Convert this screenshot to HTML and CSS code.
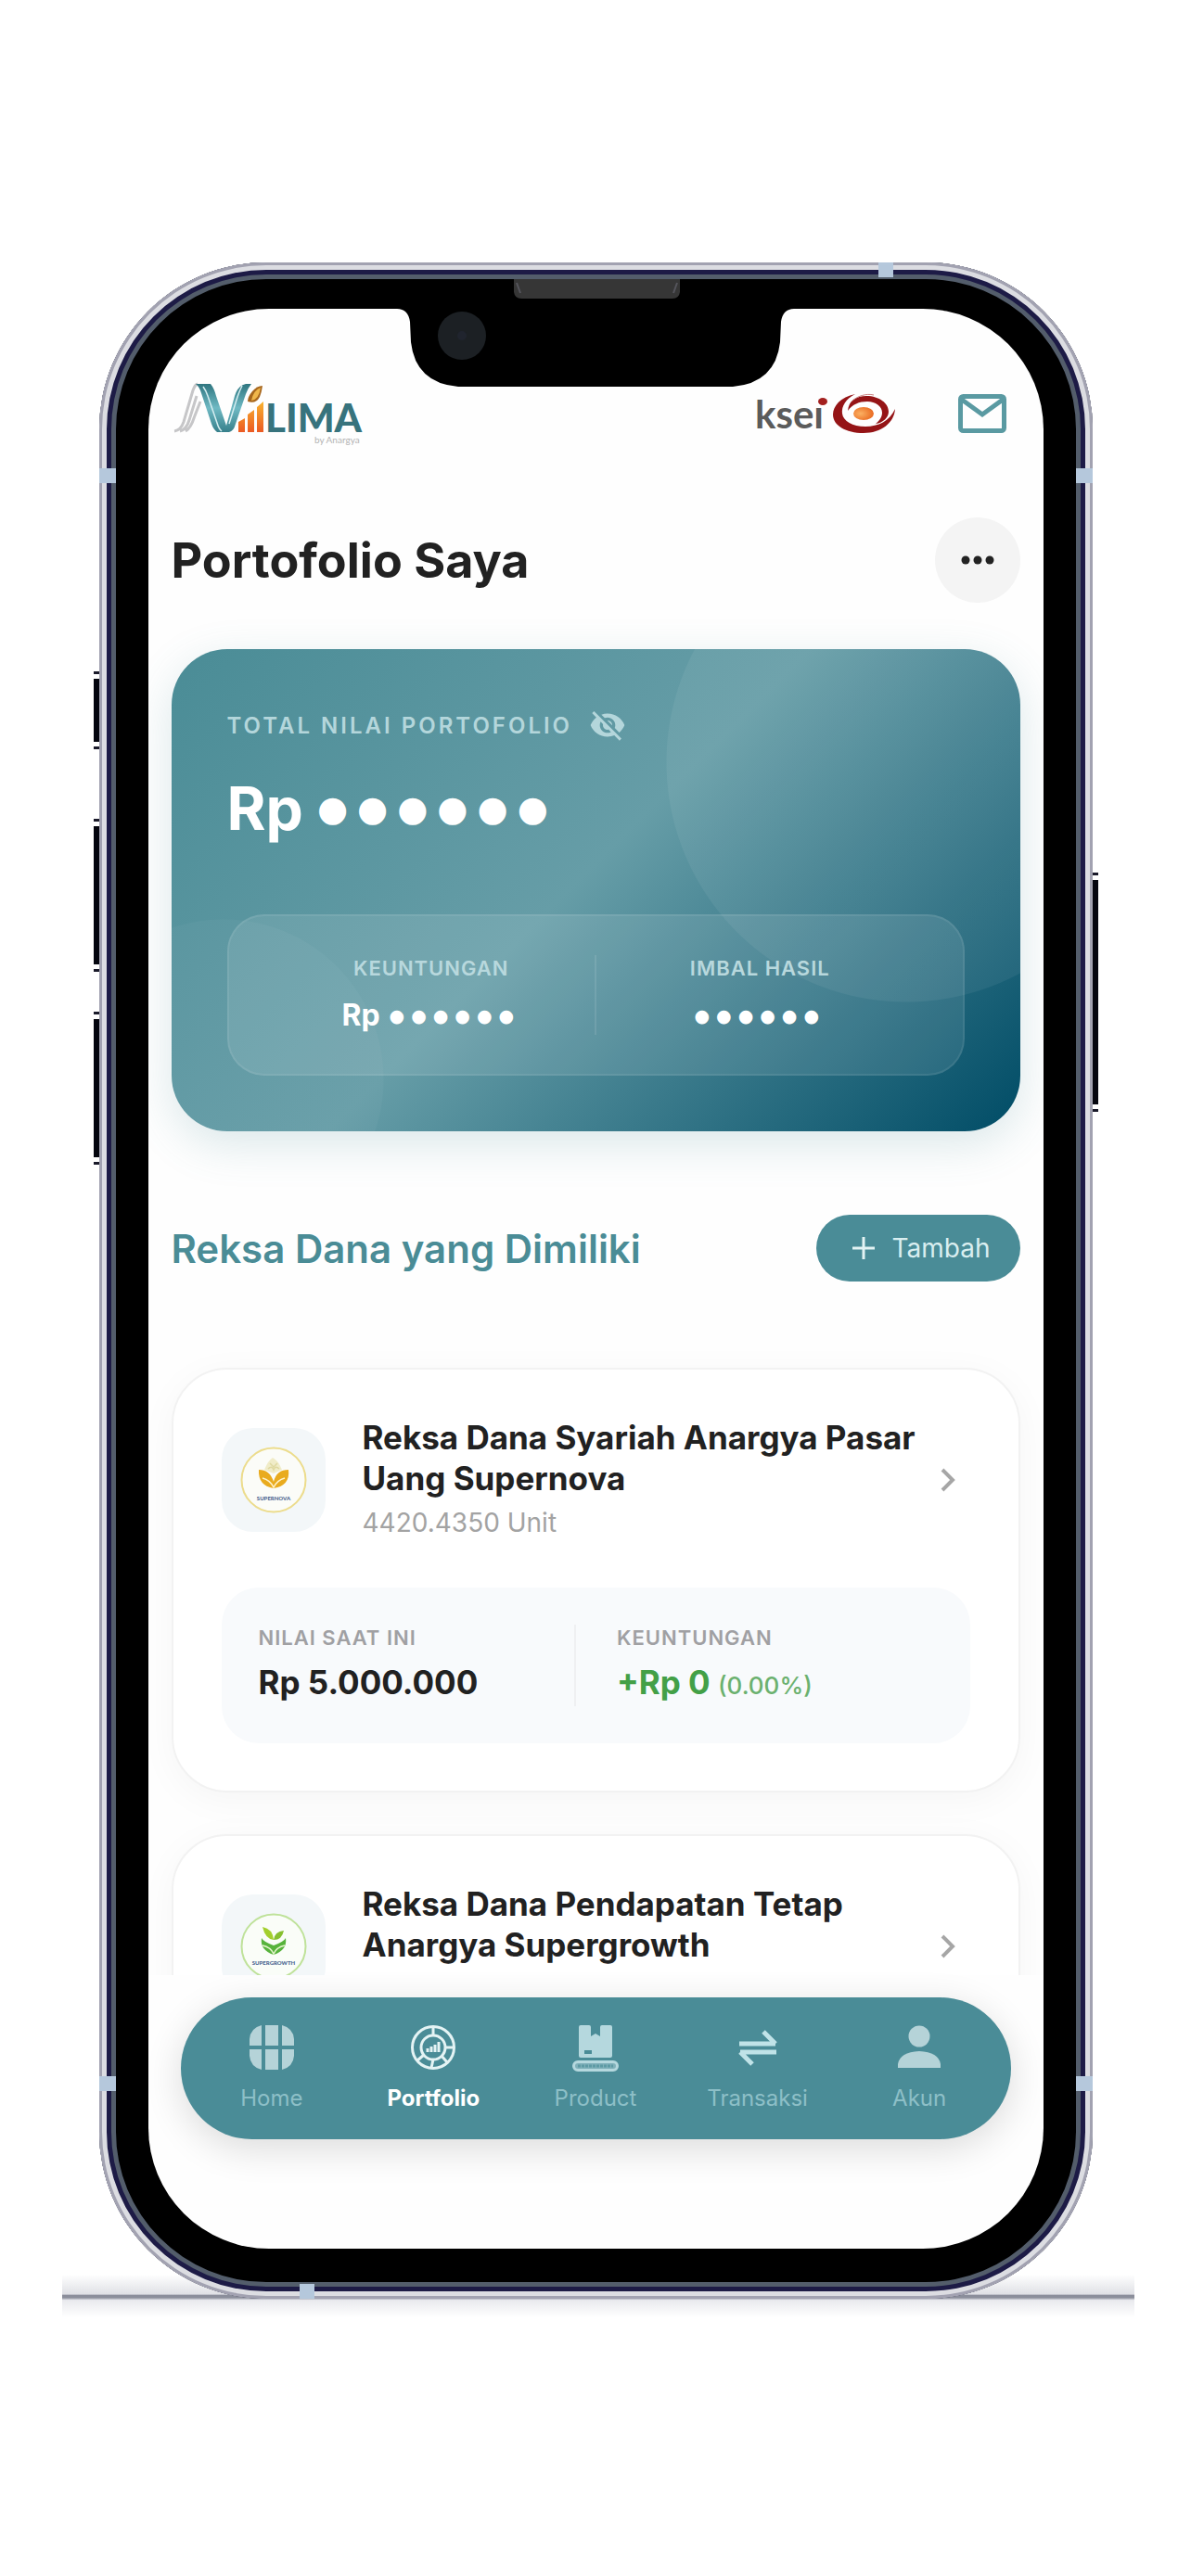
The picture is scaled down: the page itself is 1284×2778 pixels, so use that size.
FILE: index.html
```html
<!DOCTYPE html>
<html lang="id">
<head>
    <meta charset="UTF-8" />
    <meta name="viewport" content="width=device-width, initial-scale=1.0" />
    <title>Portofolio Saya</title>
    <link rel="stylesheet" href="styles.css">
</head>
<body>
    <div class="stage">
        <div class="ground"></div>
        <div class="side-button silent"></div>
        <div class="side-button volume-up"></div>
        <div class="side-button volume-down"></div>
        <div class="side-button power"></div>

        <div class="phone">
            <span class="antenna left-top"></span>
            <span class="antenna left-bottom"></span>
            <span class="antenna right-top"></span>
            <span class="antenna right-bottom"></span>
            <span class="antenna top"></span>
            <span class="antenna bottom"></span>
            <svg class="notch" width="428" height="116" viewBox="0 0 428 116">
                <path d="M0 32 Q12 32 14 46 L15 68 Q20 112 66 116 H362 Q408 112 413 68 L414 46 Q416 32 428 32 V28 H0 Z" fill="#000" />
                <path d="M126 0 H305 V14 Q304 21 297 21 H134 Q127 21 126 14 Z" fill="#363636" />
                <path d="M129 4 L133 15 M302 4 L298 15" stroke="#55555c" stroke-width="2" />
                <circle cx="70" cy="61" r="26" fill="#1c2024" />
                <circle cx="70" cy="61" r="5" fill="#20242e" />
            </svg>

            <div class="screen">
                <header class="topbar">
                    <svg class="logo" width="206" height="66" viewBox="0 0 206 66" role="img" aria-label="NAVI LIMA by Anargya">
                        <defs>
                            <linearGradient id="teal" x1="0" y1="0" x2="0" y2="1">
                                <stop offset="0" stop-color="#2f7680" />
                                <stop offset="0.5" stop-color="#6fb9c3" />
                                <stop offset="1" stop-color="#37808b" />
                            </linearGradient>
                            <linearGradient id="bar" x1="0" y1="0" x2="0" y2="1">
                                <stop offset="0" stop-color="#f8b32e" />
                                <stop offset="1" stop-color="#ec5a23" />
                            </linearGradient>
                        </defs>
                        <path d="M3 52 Q10 51 13 42 L23 8 Q25 2 28 1 M9 52 Q16 50 19 40 L27 14 M15 52 Q21 48 24 38 L31 20" fill="none" stroke="#c6c6c8" stroke-width="3" />
                        <path d="M26 1 H42 Q46 6 48 14 L59 46 L68 14 Q71 3 80 1 H86 Q82 6 80 12 L69 44 Q67 52 62 53 H49 Q45 50 43 44 L32 11 Q30 4 26 1Z" fill="url(#teal)" />
                        <path d="M34 4 Q37 8 39 14 L49 43 Q51 50 54 52 M76 3 Q73 9 71 15 L62 44" fill="none" stroke="#d6eef1" stroke-width="1.5" />
                        <path d="M98 3 Q92 3 87 9 Q82 15 82 20 Q91 23 95 15 Q97 10 98 3Z" fill="#a7661c" />
                        <path d="M96 5 Q88 8 86 19 Q94 18 96 5Z" fill="#efb64b" />
                        <path d="M72 42 L79 38 V53 H72Z M82 34 L89 29 V53 H82Z M92 26 L99 20 V53 H92Z" fill="url(#bar)" />
                        <text x="101" y="53" class="logo-name">LIMA</text>
                        <text x="154" y="65" class="logo-by">by Anargya</text>
                    </svg>
                    <div class="topbar-right">
                        <svg class="ksei" width="152" height="50" viewBox="0 0 152 50" role="img" aria-label="ksei">
                            <defs>
                                <radialGradient id="core" cx="0.35" cy="0.5" r="0.7">
                                    <stop offset="0" stop-color="#fbb163" />
                                    <stop offset="1" stop-color="#e8641b" />
                                </radialGradient>
                            </defs>
                            <text x="0" y="41" class="ksei-name">kseı</text>
                            <ellipse cx="73" cy="12" rx="5" ry="4" fill="#a3201f" />
                            <path d="M108 4 C92 7 84 17 84 26 C84 38 98 46 117 46 C136 46 150 35 151 20 C145 33 133 39 119 39 C105 39 95 33 94 25 C93 17 98 9 108 4Z" fill="#951416" />
                            <path d="M100 22 C101 11 109 6 120 6 C134 6 144 14 144 23 C144 29 138 35 130 36 C135 32 137 28 137 24 C137 17 130 12 121 12 C112 12 105 15 100 22Z" fill="#951416" />
                            <path d="M104 12 C110 6 120 3 128 5" fill="none" stroke="#c98080" stroke-width="1" />
                            <ellipse cx="117" cy="25" rx="11" ry="7" fill="url(#core)" />
                        </svg>
                        <button class="mail" aria-label="Pesan">
                            <svg width="52" height="42" viewBox="0 0 52 42" fill="none" stroke="#5a9aa2" stroke-width="5">
                                <rect x="2.5" y="2.5" width="47" height="37" rx="3" />
                                <path d="M4 6 L26 22 L48 6" />
                            </svg>
                        </button>
                    </div>
                </header>

                <main class="content">
                    <div class="title-row">
                        <h1>Portofolio Saya</h1>
                        <button class="more" aria-label="Menu lainnya">
                            <svg width="36" height="10" viewBox="0 0 36 10" fill="#222">
                                <circle cx="5" cy="5" r="4.5" />
                                <circle cx="18" cy="5" r="4.5" />
                                <circle cx="31" cy="5" r="4.5" />
                            </svg>
                        </button>
                    </div>

                    <section class="summary">
                        <div class="summary-label">
                            <span>TOTAL NILAI PORTOFOLIO</span>
                            <button class="eye" aria-label="Tampilkan nilai">
                                <svg width="40" height="40" viewBox="0 0 24 24" fill="#b4d6db">
                                    <path d="M12 7c2.76 0 5 2.24 5 5 0 .65-.13 1.26-.36 1.83l2.92 2.92c1.51-1.26 2.7-2.89 3.43-4.75-1.73-4.39-6-7.5-11-7.5-1.4 0-2.74.25-3.98.7l2.16 2.16C10.74 7.13 11.35 7 12 7zM2 4.27l2.28 2.28.46.46C3.08 8.3 1.78 10.02 1 12c1.73 4.39 6 7.5 11 7.5 1.55 0 3.03-.3 4.38-.84l.42.42L19.73 22 21 20.73 3.27 3 2 4.27zM7.53 9.8l1.55 1.55c-.05.21-.08.43-.08.65 0 1.66 1.34 3 3 3 .22 0 .44-.03.65-.08l1.55 1.55c-.67.33-1.41.53-2.2.53-2.76 0-5-2.24-5-5 0-.79.2-1.53.53-2.2zm4.31-.78l3.15 3.15.02-.16c0-1.66-1.34-3-3-3l-.17.01z" />
                                </svg>
                            </button>
                        </div>
                        <div class="total">Rp <span class="masked">●●●●●●</span></div>
                        <div class="summary-stats">
                            <div class="summary-stat">
                                <span class="stat-label">KEUNTUNGAN</span>
                                <span class="stat-value">Rp <span class="masked">●●●●●●</span></span>
                            </div>
                            <div class="summary-stat">
                                <span class="stat-label">IMBAL HASIL</span>
                                <span class="stat-value"><span class="masked">●●●●●●</span></span>
                            </div>
                        </div>
                    </section>

                    <div class="section-row">
                        <h2>Reksa Dana yang Dimiliki</h2>
                        <button class="add">
                            <svg width="26" height="26" viewBox="0 0 26 26" stroke="#e3f3f4" stroke-width="3">
                                <path d="M13 1 V25 M1 13 H25" />
                            </svg>
                            Tambah
                        </button>
                    </div>

                    <article class="fund">
                        <div class="fund-head">
                            <div class="fund-logo">
                                <svg width="72" height="72" viewBox="0 0 72 72">
                                    <circle cx="36" cy="36" r="34.5" fill="#fbfcf8" stroke="#ecdc8c" stroke-width="2" />
                                    <path d="M26 25 Q30 15 35 12 Q41 15 45 25 L36 29Z" fill="#f0ecc8" />
                                    <path d="M30 24 Q34 20 36 25 Q38 20 42 24 M32 18 L36 22 L40 18" fill="none" stroke="#dfd9a0" stroke-width="1.5" />
                                    <path d="M20 25 Q32 25 36 38 Q39 25 52 25 Q54 42 36 45 Q19 42 20 25Z" fill="#e9ab1e" />
                                    <path d="M24 34 Q32 36 36 44 Q40 36 48 34" fill="none" stroke="#fff3cd" stroke-width="1.5" />
                                    <text x="36" y="58" class="fund-mark">SUPERNOVA</text>
                                </svg>
                            </div>
                            <div class="fund-info">
                                <h3>Reksa Dana Syariah Anargya Pasar Uang Supernova</h3>
                                <p>4420.4350 Unit</p>
                            </div>
                            <svg class="chevron" width="18" height="26" viewBox="0 0 18 26" fill="none" stroke="#a6a6a6" stroke-width="4">
                                <path d="M3 2 L14 13 L3 24" />
                            </svg>
                        </div>
                        <div class="fund-stats">
                            <div class="fund-stat">
                                <span class="stat-label">NILAI SAAT INI</span>
                                <span class="fund-value">Rp 5.000.000</span>
                            </div>
                            <div class="fund-stat">
                                <span class="stat-label">KEUNTUNGAN</span>
                                <span class="fund-value gain">+Rp 0 <small>(0.00%)</small></span>
                            </div>
                        </div>
                    </article>

                    <article class="fund">
                        <div class="fund-head">
                            <div class="fund-logo">
                                <svg width="72" height="72" viewBox="0 0 72 72">
                                    <circle cx="36" cy="36" r="34.5" fill="#fafdf8" stroke="#bfe29a" stroke-width="2" />
                                    <path d="M24 15 Q35 17 36 29 Q27 28 24 15Z" fill="#a3cf2c" />
                                    <path d="M47 19 Q37 20 36 29 Q45 29 47 19Z" fill="#86bf2f" />
                                    <path d="M23 27 Q25 31 36 35 Q47 31 49 27 Q51 40 36 45 Q21 40 23 27Z" fill="#57b33c" />
                                    <path d="M24 35 Q33 37 36 44 Q39 37 48 35" fill="none" stroke="#e5f5cc" stroke-width="1.5" />
                                    <text x="36" y="56" class="fund-mark">SUPERGROWTH</text>
                                </svg>
                            </div>
                            <div class="fund-info">
                                <h3>Reksa Dana Pendapatan Tetap Anargya Supergrowth</h3>
                            </div>
                            <svg class="chevron" width="18" height="26" viewBox="0 0 18 26" fill="none" stroke="#a6a6a6" stroke-width="4">
                                <path d="M3 2 L14 13 L3 24" />
                            </svg>
                        </div>
                    </article>
                </main>

                <nav class="tabs">
                    <a href="#">
                        <svg width="48" height="48" viewBox="0 0 48 48" fill="#b5d3d8">
                            <path d="M13 0 V22 H0 V15 Q1 3 13 0Z M17 0 H31 V22 H17Z M35 0 Q47 3 48 15 V22 H35Z M0 26 H13 V48 Q1 45 0 33Z M17 26 H31 V48 H17Z M35 26 H48 V33 Q47 45 35 48Z" />
                        </svg>
                        Home
                    </a>
                    <a href="#" class="active">
                        <svg width="48" height="48" viewBox="0 0 48 48" fill="none" stroke="#e4f3f4" stroke-width="3">
                            <circle cx="24" cy="24" r="22.5" />
                            <circle cx="24" cy="24" r="13" />
                            <path d="M24 2 V11 M37 24 H46 M33 33 L39 40 M24 37 L22 46 M14 32 L7 38" />
                            <path d="M18 29 V25 M22 29 V23 M26 29 V21 M30 29 V18" />
                        </svg>
                        Portfolio
                    </a>
                    <a href="#">
                        <svg width="50" height="50" viewBox="0 0 50 50" fill="#b5d8de">
                            <path d="M9 0 H18 Q20 0 20 2 V12 L25 9 L30 12 V2 Q30 0 32 0 H41 Q43 0 43 2 V33 Q43 35 41 35 H9 Q7 35 7 33 V2 Q7 0 9 0Z" />
                            <path d="M13 29 H21" stroke="#4a8c97" stroke-width="4" />
                            <rect x="1.5" y="39.5" width="47" height="9" rx="4.5" fill="#80b1ba" stroke="#b5d8de" stroke-width="3" />
                            <path d="M6 44 H44" stroke="#5d9aa4" stroke-width="3" stroke-dasharray="3 1" />
                        </svg>
                        Product
                    </a>
                    <a href="#">
                        <svg width="48" height="48" viewBox="0 0 48 48" fill="none" stroke="#c0e3e8" stroke-width="5">
                            <path d="M4 20 H43 M43 20 L30 7 M44 29 H5 M5 29 L18 42" />
                        </svg>
                        Transaksi
                    </a>
                    <a href="#">
                        <svg width="48" height="48" viewBox="0 0 48 48" fill="#b5d3d8">
                            <circle cx="24" cy="12" r="11.5" />
                            <path d="M1 46 V42 Q3 29 24 28 Q45 29 47 42 V46Z" />
                        </svg>
                        Akun
                    </a>
                </nav>
            </div>
        </div>
    </div>
</body>
</html>
```
FILE: styles.css
```css
* {
    box-sizing: border-box;
}
body {
    margin: 0;
    background: #fff;
    font-family: Inter, "Liberation Sans", sans-serif;
    color: #212121;
}
h1, h2, h3, p {
    margin: 0;
}
button {
    border: none;
    background: none;
    padding: 0;
    font-family: inherit;
    cursor: pointer;
}
svg {
    display: block;
    flex-shrink: 0;
}

/* phone body */
.stage {
    position: relative;
    max-width: 1071px;
    margin: 283px auto;
}
.phone {
    position: relative;
    padding: 50px 53px 54px;
    border-radius: 180px;
    background: #000;
    box-shadow:
        inset 0 0 0 3px #a2a2b1,
        inset 0 0 0 8px #dcdde2,
        inset 0 0 0 13px #1d1b46,
        inset 0 0 0 18px #535d6b;
}
.screen {
    border-radius: 130px;
    background: #fefefe;
    overflow: hidden;
}
.notch {
    position: absolute;
    top: 18px;
    left: 50%;
    margin-left: -214px;
}
.ground {
    position: absolute;
    left: -40px;
    right: -45px;
    bottom: -20px;
    height: 46px;
    background: linear-gradient(#fff, #dfe0e5 46%, #8b8e9b 48%, #8b8e9b 54%, #e9eaee 60%, #fff);
}
.antenna {
    position: absolute;
    width: 18px;
    height: 16px;
    background: #b5c8dc;
}
.left-top, .left-bottom {
    left: 0;
}
.right-top, .right-bottom {
    right: 0;
}
.left-top, .right-top {
    top: 222px;
}
.left-bottom, .right-bottom {
    bottom: 224px;
}
.antenna.top {
    top: 0;
    right: 215px;
    width: 16px;
}
.antenna.bottom {
    bottom: 0;
    left: 216px;
    width: 16px;
}
.side-button {
    position: absolute;
    left: -6px;
    width: 8px;
    border: solid #1a1a2a;
    border-width: 3px 0;
    padding: 5px 0;
    background: #05060f content-box;
}
.silent {
    top: 441px;
    height: 84px;
}
.volume-up {
    top: 600px;
    height: 165px;
}
.volume-down {
    top: 808px;
    height: 165px;
}
.power {
    left: auto;
    right: -6px;
    top: 658px;
    height: 258px;
}

/* top bar */
.topbar {
    display: flex;
    justify-content: space-between;
    align-items: center;
    padding: 80px 40px 0 25px;
}
.topbar-right {
    display: flex;
    align-items: center;
    gap: 67px;
}
.logo {
    overflow: visible;
}
.logo-name {
    font-family: Lato, sans-serif;
    font-size: 42px;
    font-weight: 900;
    fill: #37737d;
}
.logo-by {
    font-family: Lato, sans-serif;
    font-size: 10px;
    fill: #b3b3b3;
}
.ksei-name {
    font-family: Lato, sans-serif;
    font-size: 42px;
    font-weight: 700;
    fill: #5b5b5b;
}

/* content */
.content {
    height: 1651px;
    padding: 79px 25px 0;
    overflow: hidden;
}
.title-row, .section-row {
    display: flex;
    justify-content: space-between;
    align-items: center;
}
h1 {
    font-size: 52px;
    font-weight: 700;
}
.more {
    display: flex;
    align-items: center;
    justify-content: center;
    width: 92px;
    height: 92px;
    border-radius: 50%;
    background: #f4f4f4;
}

.summary {
    margin-top: 50px;
    padding: 60px;
    border-radius: 60px;
    color: #fff;
    background:
        radial-gradient(circle at 56px 464px, rgba(255, 255, 255, 0.03) 172px, transparent 173px),
        radial-gradient(circle at calc(100% - 123px) 122px, rgba(255, 255, 255, 0.06) 258px, transparent 259px),
        linear-gradient(135deg, #4a8c96, #669da7 48%, #004c66);
    box-shadow: 0 14px 48px rgba(74, 140, 150, 0.2);
}
.summary-label {
    display: flex;
    align-items: center;
    gap: 18px;
    height: 44px;
    font-size: 24px;
    font-weight: 600;
    letter-spacing: 3px;
    color: #b4d6db;
}
.masked {
    font-family: "DejaVu Sans", sans-serif;
    font-weight: 400;
    line-height: 1;
}
.total {
    display: flex;
    align-items: center;
    gap: 15px;
    margin-top: 28px;
    font-size: 64px;
    font-weight: 700;
    line-height: 80px;
}
.total .masked {
    font-size: 38px;
    letter-spacing: 10px;
}
.summary-stats {
    display: flex;
    margin-top: 74px;
    padding: 42px;
    border: 2px solid rgba(255, 255, 255, 0.08);
    border-radius: 40px;
    background: rgba(255, 255, 255, 0.1);
}
.summary-stat {
    flex: 1;
    display: flex;
    flex-direction: column;
    align-items: center;
    gap: 16px;
}
.summary-stat + .summary-stat {
    border-left: 2px solid rgba(255, 255, 255, 0.1);
}
.stat-label {
    font-size: 22px;
    line-height: 28px;
    font-weight: 600;
    letter-spacing: 1px;
}
.summary .stat-label {
    color: #b8d8dd;
}
.stat-value {
    display: flex;
    align-items: center;
    gap: 10px;
    height: 42px;
    font-size: 32px;
    line-height: 42px;
    font-weight: 700;
}
.stat-value .masked {
    font-size: 19px;
    letter-spacing: 7px;
}

.section-row {
    margin-top: 90px;
    margin-bottom: 93px;
}
h2 {
    font-size: 42px;
    font-weight: 600;
    color: #4a8c96;
}
.add {
    display: flex;
    align-items: center;
    gap: 18px;
    height: 72px;
    padding: 0 32px 0 38px;
    border-radius: 36px;
    background: #4a8c97;
    color: #d9eef0;
    font-size: 28px;
}

.fund {
    margin-bottom: 45px;
    padding: 51px 52px;
    border: 2px solid #f2f2f2;
    border-radius: 60px;
    background: #fff;
    box-shadow: 0 8px 40px rgba(0, 0, 0, 0.04);
}
.fund-head {
    display: flex;
    align-items: center;
    min-height: 136px;
    padding-right: 15px;
}
.fund-logo {
    display: flex;
    align-items: center;
    justify-content: center;
    flex-shrink: 0;
    width: 112px;
    height: 112px;
    margin-right: 40px;
    border-radius: 34px;
    background: #f3f7f9;
}
.fund-mark {
    font-family: Lato, sans-serif;
    font-size: 6px;
    font-weight: 900;
    text-anchor: middle;
    fill: #4b6590;
}
.fund-info {
    flex: 1;
    align-self: flex-start;
}
h3 {
    font-size: 35px;
    line-height: 44px;
    font-weight: 700;
}
.fund-info p {
    margin-top: 4px;
    font-size: 28px;
    line-height: 44px;
    color: #a3a3a3;
}
.fund-stats {
    display: flex;
    margin-top: 48px;
    padding: 40px;
    border-radius: 40px;
    background: #f8fafc;
}
.fund-stat {
    flex: 1;
    display: flex;
    flex-direction: column;
    gap: 12px;
}
.fund-stat + .fund-stat {
    padding-left: 44px;
    border-left: 2px solid #eff0f2;
}
.fund-stats .stat-label {
    color: #a0a0a3;
}
.fund-value {
    font-size: 35px;
    line-height: 44px;
    font-weight: 700;
}
.gain {
    color: #43a047;
}
.gain small {
    font-size: 26px;
    font-weight: 500;
    color: #6bb16f;
}

/* bottom navigation */
.tabs {
    display: flex;
    align-items: center;
    height: 153px;
    margin: 24px 35px 118px;
    padding: 0 11px;
    border-radius: 77px;
    background: #4a8c97;
    box-shadow: 0 10px 40px rgba(0, 0, 0, 0.14);
}
.tabs a {
    flex: 1;
    display: flex;
    flex-direction: column;
    align-items: center;
    justify-content: space-between;
    height: 94px;
    font-size: 24px;
    line-height: 30px;
    color: #8dbfc7;
    text-decoration: none;
}
.tabs .active {
    font-weight: 700;
    color: #fff;
}
```
